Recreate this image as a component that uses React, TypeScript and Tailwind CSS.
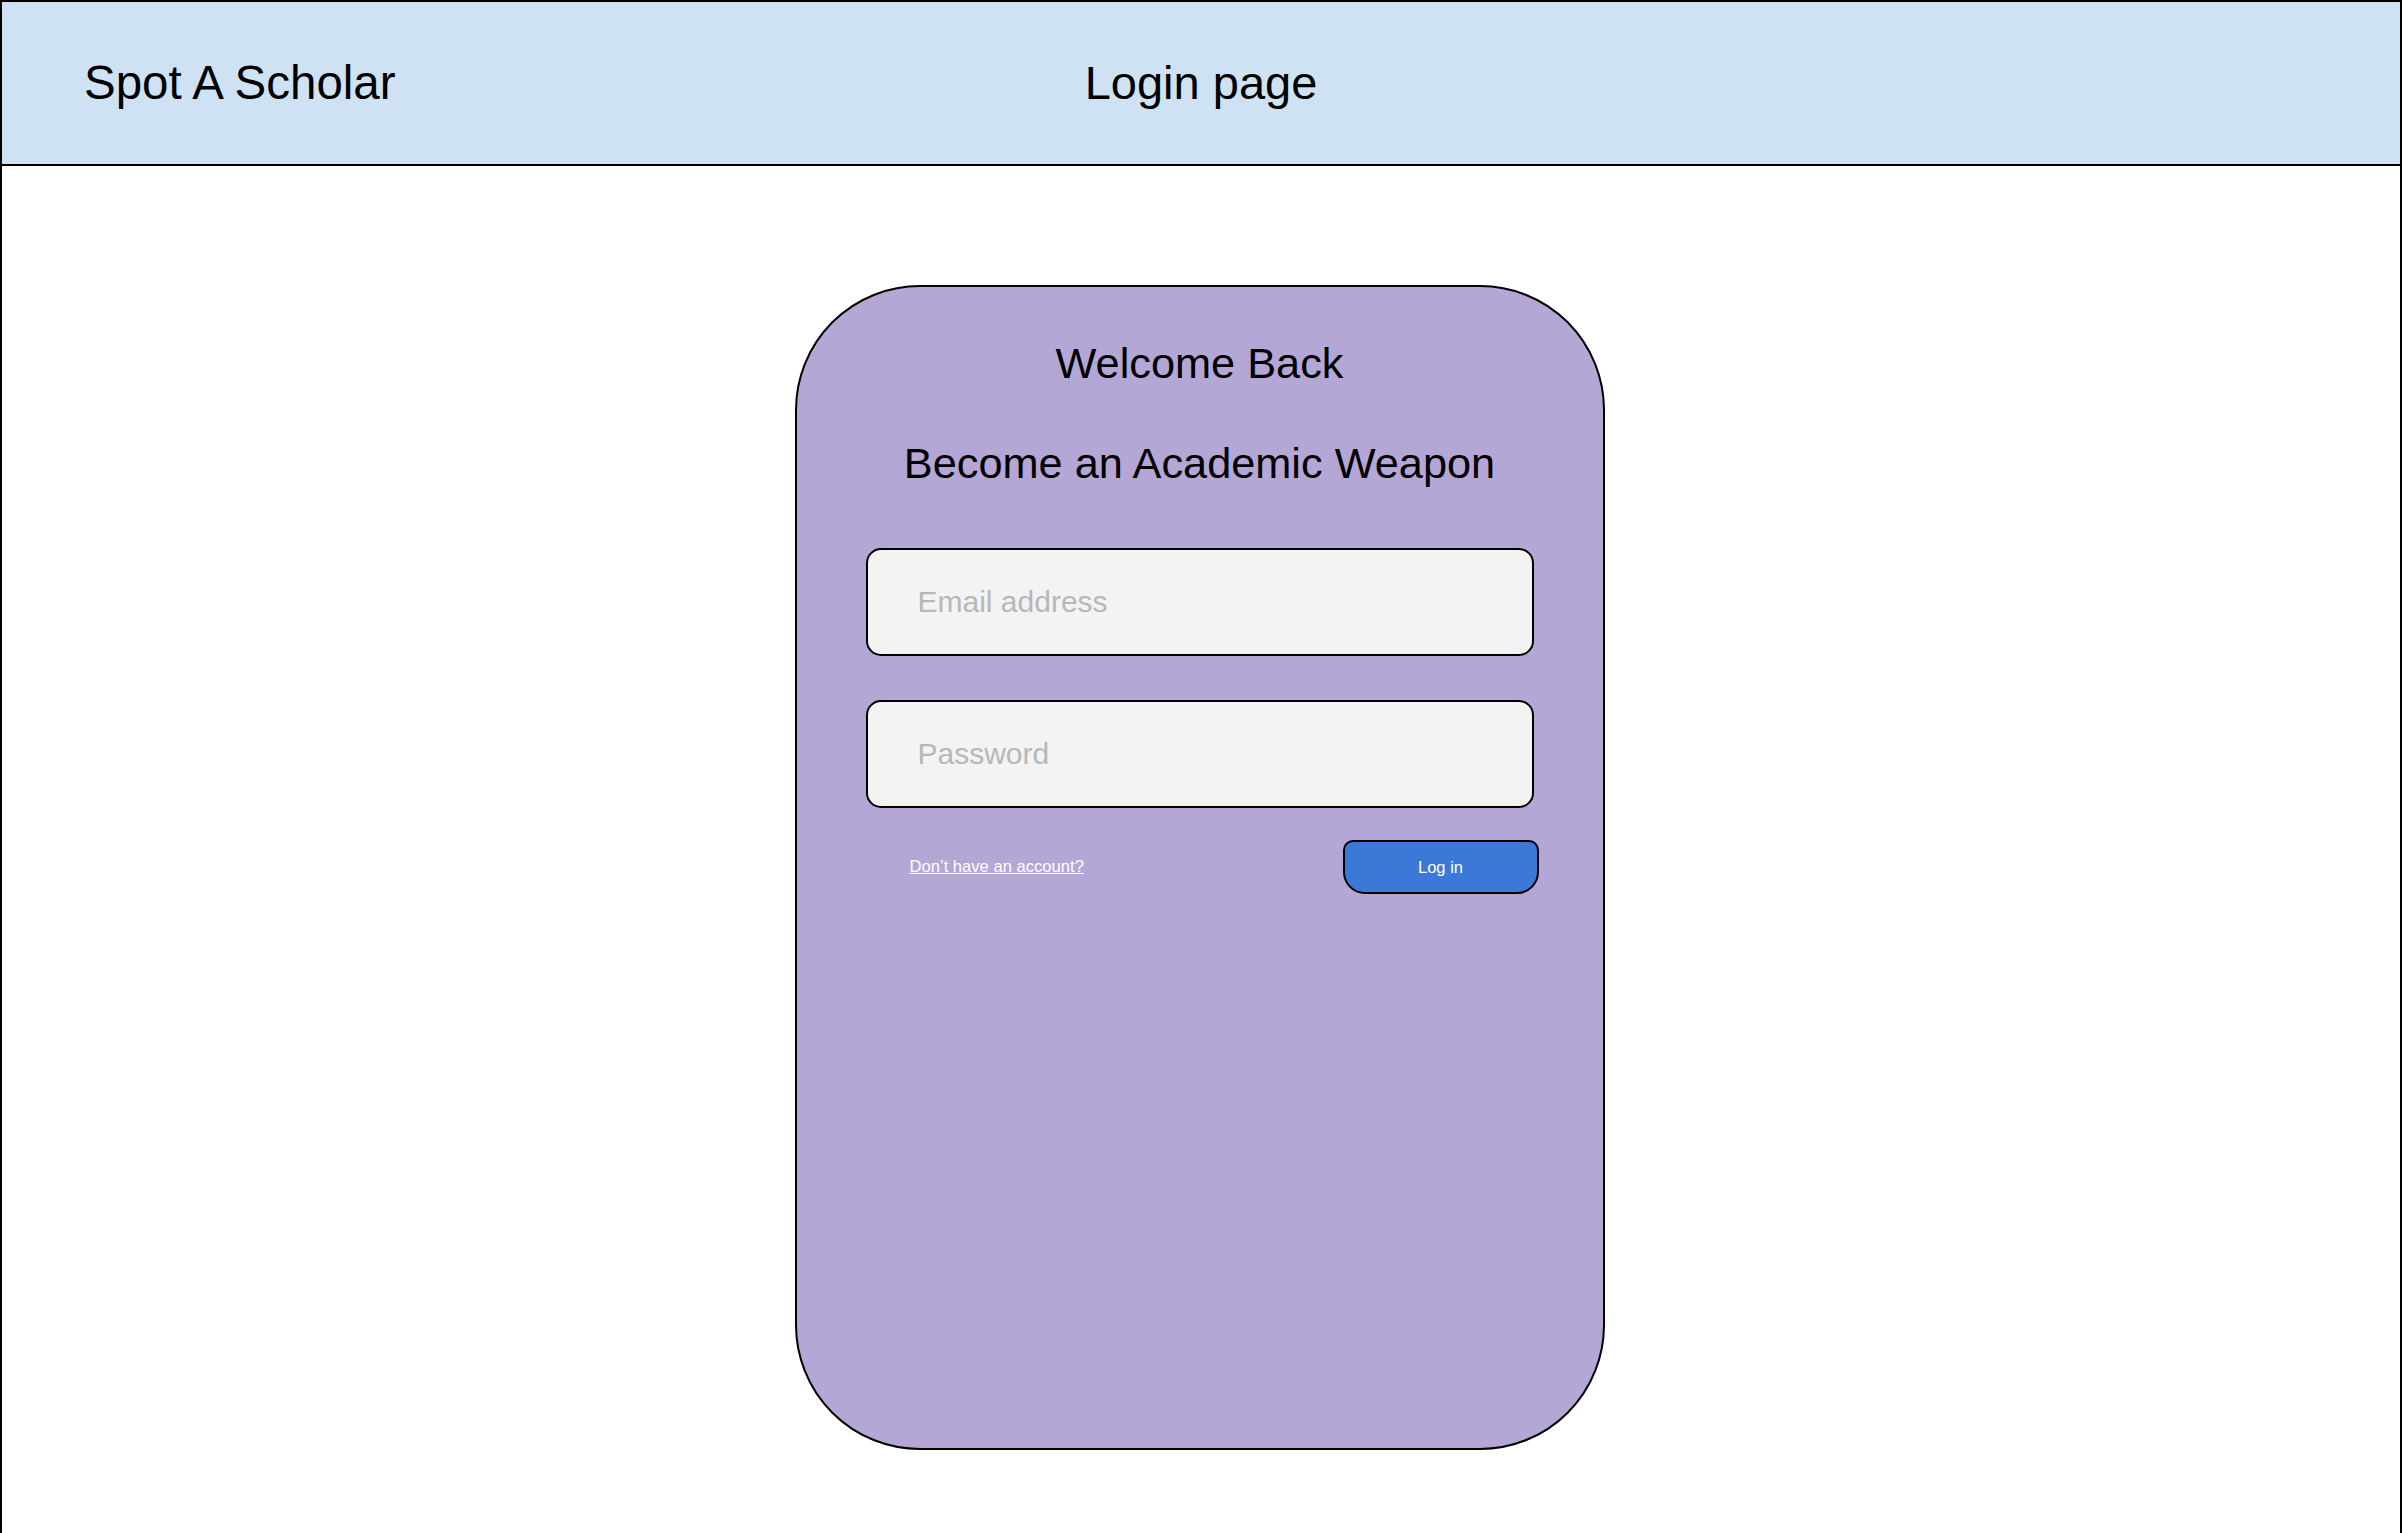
import React from "react";

const font = { fontFamily: '"Liberation Sans", Arial, sans-serif' };

export default function App() {
  return (
    <div
      style={font}
      className="w-full h-[1533px] bg-white border-t-2 border-l-2 border-r-2 border-black overflow-hidden"
    >
      {/* header */}
      <header className="h-[164px] bg-[#cfe2f3] border-b-2 border-black grid grid-cols-[1fr_auto_1fr] items-center">
        <span className="pl-[82px] text-[47.5px] text-black">Spot A Scholar</span>
        <span className="text-[47px] text-black">Login page</span>
        <span />
      </header>

      {/* login card */}
      <main className="flex justify-center pt-[119px] pr-[3px]">
        <div className="w-[810px] h-[1165px] bg-[#b4a7d6] border-2 border-black rounded-[125px] flex flex-col px-[69px] pt-[52px]">
          <h1 className="text-[43.3px] leading-[49px] text-black text-center">Welcome Back</h1>
          <h2 className="mt-[51px] text-[43.3px] leading-[49px] text-black text-center">
            Become an Academic Weapon
          </h2>

          <input
            type="email"
            placeholder="Email address"
            className="mt-[60px] h-[108px] w-full bg-[#f3f3f3] border-2 border-black rounded-[15px] pl-[50px] text-[30px] placeholder:text-[#b7b7b7] outline-none"
          />
          <input
            type="password"
            placeholder="Password"
            className="mt-[44px] h-[108px] w-full bg-[#f3f3f3] border-2 border-black rounded-[15px] pl-[50px] text-[30px] placeholder:text-[#b7b7b7] outline-none"
          />

          <div className="mt-[32px] flex items-center justify-between -mr-[5px]">
            <a href="#" className="ml-[44px] text-[16.6px] text-white underline">
              Don’t have an account?
            </a>
            <button className="w-[196px] h-[54px] bg-[#3c78d8] border-[2.5px] border-black rounded-tl-[10px] rounded-tr-[10px] rounded-bl-[22px] rounded-br-[22px] text-white text-[16.5px]">
              Log in
            </button>
          </div>
        </div>
      </main>
    </div>
  );
}
